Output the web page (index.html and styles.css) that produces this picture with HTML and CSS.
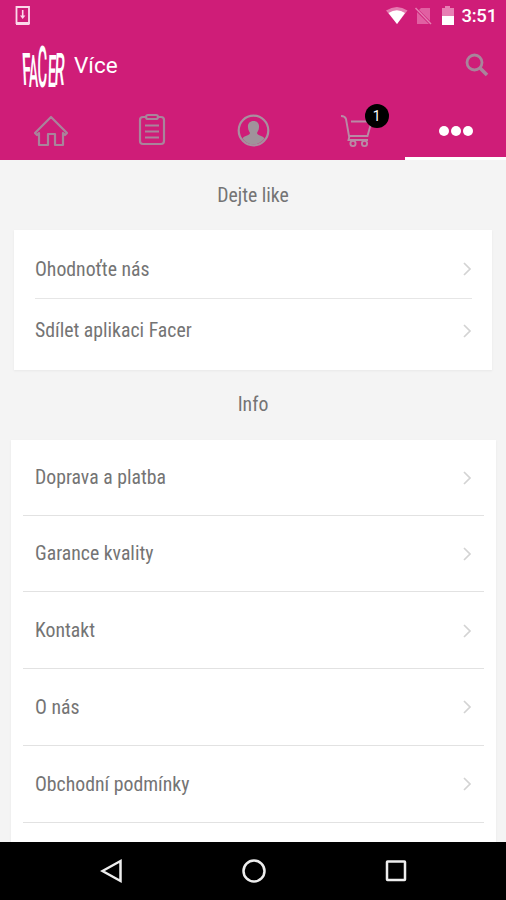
FILE: index.html
```html
<!DOCTYPE html>
<html lang="cs">
<head>
<meta charset="utf-8">
<title>Více</title>
<link rel="stylesheet" href="styles.css">
</head>
<body>
<header class="header">
  <div class="status">
    <svg class="status-download" width="16" height="22" viewBox="0 0 16 22"><path d="M1.500 2h12.500v16H1.500z" fill="none" stroke="#fbd9ea" stroke-width="1.800"/><path d="M1 17h13.500v3H1z" fill="#fbd9ea"/><path d="M7.700 5v6" stroke="#fbd9ea" stroke-width="1.600"/><path d="M5 10.500h5.400L7.700 14z" fill="#fbd9ea"/></svg>
    <svg class="status-icons" width="72" height="20" viewBox="0 0 72 20">
      <path d="M0 4.500Q11 -2.500 21.500 4.500L11 18z" fill="#e47bb0"/><path d="M2.500 7Q11 1.500 19 7L11 18z" fill="#fff"/>
      <path d="M35 2h9v16H31V6z" fill="#e160a2"/><path d="M29 2l16 16" stroke="#cf1d78" stroke-width="3"/><path d="M29.500 2l15.500 16" stroke="#e57fb3" stroke-width="1.500"/>
      <path d="M59 0h5v2h4v9H56V2h3z" fill="#e77fb3"/><path d="M56 10h12v9H56z" fill="#fff"/>
    </svg>
    <span class="clock">3:51</span>
  </div>
  <div class="title-bar">
    <svg class="logo" width="46" height="46" viewBox="0 0 46 46" role="img">
      <g font-family="Roboto, sans-serif" font-weight="500" fill="#fff" font-size="20">
        <text transform="matrix(.80 0 .11 2.250 3 42)">F</text>
        <text transform="matrix(.70 0 .03 2.250 9 43.500)">A</text>
        <text transform="matrix(.74 0 0 2.850 17.500 43.500)">C</text>
        <text transform="matrix(.74 0 -.06 2.250 27.500 43.500)">E</text>
        <text transform="matrix(.80 0 -.11 2.250 34 42)">R</text>
      </g>
    </svg>
    <h1 class="title">Více</h1>
    <svg class="search" width="24" height="24" viewBox="0 0 24 24" fill="none" stroke="#a9849b"><circle cx="9.500" cy="9.500" r="7.500" stroke-width="2.800"/><path d="M15 15l7 7" stroke-width="3.500"/></svg>
  </div>
  <nav class="tabs">
    <a class="tab"><svg width="36" height="34" viewBox="0 0 36 34" fill="none" stroke="#a9849b" stroke-width="2.200" stroke-linejoin="round"><path d="M2 19L18 3l16 16-2 2-2-2v12h-8V20h-7v11H6V19l-2 2z"/></svg></a>
    <a class="tab"><svg class="clipboard" width="28" height="34" viewBox="0 0 28 34" fill="none" stroke="#a9849b" stroke-width="2.200"><path d="M8 4H5q-3 0-3 3v21q0 3 3 3h18q3 0 3-3V7q0-3-3-3h-3"/><rect x="8" y="2" width="12" height="4" rx="2"/><path d="M7 12.500h14M7 18.500h14M7 24.500h14"/></svg></a>
    <a class="tab"><svg width="34" height="34" viewBox="0 0 34 34"><circle cx="17.500" cy="16.500" r="14.800" fill="none" stroke="#a98f9f" stroke-width="2.200"/><path d="M17.500 7c4 0 6 3 5.500 6.500-.2 3-1.500 4-2 5.500.3 2.500 5 2 7.500 5.500-6 8-16 8-22 0 2.500-3.500 7.200-3 7.500-5.500-.5-1.500-1.800-2.500-2-5.500C11.500 10 13.500 7 17.500 7z" fill="#a0939b"/></svg></a>
    <a class="tab tab-cart"><svg width="36" height="34" viewBox="0 0 36 34" fill="none" stroke="#b98aa5" stroke-width="1.900"><path d="M2 2q4 0 5 3l3 17h18.500L32 9.500M12 7.500h19M10.500 22l-1 4H29"/><circle cx="14" cy="29.500" r="2.600"/><circle cx="25.500" cy="29.500" r="2.600"/></svg><span class="badge">1</span></a>
    <a class="tab tab-active"><span class="dot"></span><span class="dot"></span><span class="dot"></span></a>
  </nav>
</header>
<main class="content">
  <h2 class="section-title">Dejte like</h2>
  <ul class="card card-like">
    <li class="row"><span>Ohodnoťte nás</span><svg class="chevron" viewBox="0 0 9 14"><path d="M1 1l6 6-6 6"/></svg></li>
    <li class="row"><span>Sdílet aplikaci Facer</span><svg class="chevron" viewBox="0 0 9 14"><path d="M1 1l6 6-6 6"/></svg></li>
  </ul>
  <h2 class="section-title section-info">Info</h2>
  <ul class="card card-info">
    <li class="row"><span>Doprava a platba</span><svg class="chevron" viewBox="0 0 9 14"><path d="M1 1l6 6-6 6"/></svg></li>
    <li class="row"><span>Garance kvality</span><svg class="chevron" viewBox="0 0 9 14"><path d="M1 1l6 6-6 6"/></svg></li>
    <li class="row"><span>Kontakt</span><svg class="chevron" viewBox="0 0 9 14"><path d="M1 1l6 6-6 6"/></svg></li>
    <li class="row"><span>O nás</span><svg class="chevron" viewBox="0 0 9 14"><path d="M1 1l6 6-6 6"/></svg></li>
    <li class="row"><span>Obchodní podmínky</span><svg class="chevron" viewBox="0 0 9 14"><path d="M1 1l6 6-6 6"/></svg></li>
  </ul>
</main>
<footer class="navbar">
  <svg width="24" height="26" viewBox="0 0 24 26"><path d="M2.500 13L20.500 3v20z"/></svg>
  <svg width="26" height="26" viewBox="0 0 26 26"><circle cx="13" cy="13" r="10.500"/></svg>
  <svg width="24" height="26" viewBox="0 0 24 26"><rect x="3" y="3.500" width="18" height="18.500" rx=".5"/></svg>
</footer>
</body>
</html>
```
FILE: styles.css
```css
* { box-sizing: border-box; }
body {
  margin: 0;
  height: 900px;
  display: flex;
  flex-direction: column;
  overflow: hidden;
  background: #f4f4f4;
  color: #747474;
  font-family: Roboto, sans-serif;
}
h1, h2, ul { margin: 0; padding: 0; font-weight: 400; list-style: none; }
svg { display: block; flex: none; }
.header { height: 160px; flex: none; background: #cf1d78; color: #fff; }
.status { height: 32px; padding: 0 9px 0 15px; display: flex; align-items: center; }
.status-download { margin-top: -1px; }
.status-icons { margin-left: auto; }
.clock { margin-left: 3px; font-size: 18.5px; font-weight: 500; letter-spacing: -.2px; }
.title-bar { height: 70px; padding: 0 17px 0 20px; display: flex; align-items: center; }
.logo { overflow: visible; margin-top: -2px; }
.title { margin: -4px 0 0 8px; font-size: 22.5px; }
.search { margin: -4px 0 0 auto; }
.tabs { height: 58px; display: grid; grid-template-columns: repeat(5, 1fr); }
.tab { position: relative; display: flex; align-items: center; justify-content: center; }
.clipboard { margin-top: -2px; }
.tab-cart { padding-left: 6px; }
.badge {
  position: absolute;
  left: 61px;
  top: 2px;
  width: 24px;
  height: 24px;
  border-radius: 50%;
  background: #000;
  font-size: 14px;
  line-height: 25px;
  text-align: center;
}
.tab-active { gap: 2px; border-bottom: 3px solid #fff; padding: 2px 0 0 2px; }
.dot { width: 10px; height: 10px; border-radius: 50%; background: #fff; }
.content { flex: 1; min-height: 0; overflow: hidden; }
.section-title { height: 70px; font-size: 19.75px; line-height: 72px; text-align: center; }
.section-title, .row { font-family: "Roboto Condensed", Roboto, sans-serif; font-stretch: 75%; }
.section-info { line-height: 70px; }
.card { background: #fff; box-shadow: 0 1px 2px #e8e8e8; }
.row { display: flex; align-items: center; justify-content: space-between; font-size: 19.75px; }
.card-like { height: 140px; margin: 0 14px; padding: 7px 20px 0 21px; }
.card-like .row { height: 62px; padding-top: 1px; }
.card-like .row:first-child { padding-top: 3px; border-bottom: 1px solid #e6e6e6; }
.card-info { height: 402px; margin: 0 10px 0 11px; padding: 0 12px; }
.card-info .row { height: 76.800px; padding: 1px 8px 0 12px; border-bottom: 1px solid #e2e2e2; }
.card-info .row:first-child { height: 75.500px; }
.chevron { width: 9px; height: 14px; fill: none; stroke: #d3d3d3; stroke-width: 1.700; }
.card-info .chevron { margin-right: 4px; }
.navbar { height: 58px; flex: none; padding: 0 98px 0 100px; display: flex; align-items: center; justify-content: space-between; background: #000; }
.navbar svg { fill: none; stroke: #eee; stroke-width: 2.500; }
```
